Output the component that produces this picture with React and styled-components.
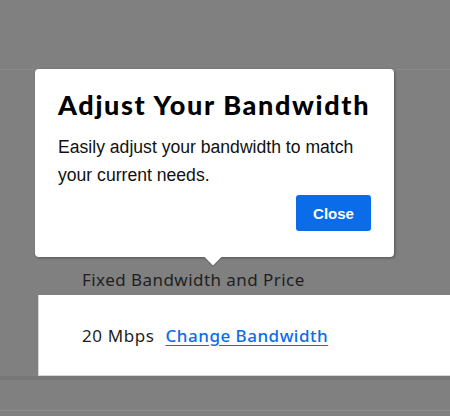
import React from "react";
import styled, { createGlobalStyle } from "styled-components";

const GlobalStyle = createGlobalStyle`
  html, body {
    margin: 0;
    padding: 0;
    background: #808080;
  }
`;

const Page = styled.div`
  width: 450px;
  height: 416px;
  background: #808080;
  display: flex;
  flex-direction: column;
  overflow: hidden;
`;

const Header = styled.div`
  height: 69px;
  border-bottom: 1px solid #8a8a8a;
  flex-shrink: 0;
`;

const Section = styled.div`
  position: relative;
  padding-left: 38px;
  padding-top: 197px;
`;

const Label = styled.div`
  font-family: "Noto Sans", sans-serif;
  font-size: 17px;
  letter-spacing: 0.45px;
  line-height: 25px;
  color: #1f1f1f;
  padding-left: 44px;
  margin-bottom: 3px;
`;

const Card = styled.div`
  height: 81px;
  background: #ffffff;
  border-left: 1px solid #d6d6d6;
  border-bottom: 1px solid #d6d6d6;
  display: flex;
  align-items: center;
  padding-left: 43px;
  padding-top: 1px;
  box-sizing: border-box;
  font-family: "Noto Sans", sans-serif;
  font-size: 17px;
  letter-spacing: 0.6px;
  color: #1f1f1f;
  gap: 11px;
`;

const Link = styled.a`
  color: #0a6ce8;
  text-decoration: underline;
  text-underline-offset: 3px;
  font-weight: 500;
  letter-spacing: 0.5px;
  cursor: pointer;
`;

const Footer = styled.div`
  height: 30px;
  border-top: 4px solid #777777;
  border-bottom: 1px solid #8c8c8c;
`;

const Popover = styled.div`
  position: absolute;
  left: 35px;
  top: -1px;
  width: 359px;
  box-sizing: border-box;
  padding: 20px 23px 26px 23px;
  background: #ffffff;
  border-radius: 4px;
  box-shadow: 1px 1px 3px rgba(0, 0, 0, 0.35);
  display: flex;
  flex-direction: column;

  &::after {
    content: "";
    position: absolute;
    left: 172px;
    bottom: -6px;
    width: 12px;
    height: 12px;
    background: #ffffff;
    transform: rotate(45deg);
    box-shadow: 1px 1px 1px rgba(0, 0, 0, 0.2);
  }
`;

const Title = styled.h2`
  margin: 0;
  font-family: "Lato", sans-serif;
  font-weight: 900;
  font-size: 27px;
  letter-spacing: 1.65px;
  line-height: 32px;
  white-space: nowrap;
  color: #000000;
`;

const Body = styled.p`
  margin: 12px 0 0 0;
  font-family: "Liberation Sans", Arial, sans-serif;
  font-size: 17.6px;
  line-height: 28px;
  color: #111111;
`;

const Actions = styled.div`
  display: flex;
  justify-content: flex-end;
  margin-top: 6px;
`;

const CloseButton = styled.button`
  width: 75px;
  height: 36px;
  border: none;
  border-radius: 3px;
  background: #0a6ce8;
  color: #ffffff;
  font-family: "Liberation Sans", Arial, sans-serif;
  font-weight: 700;
  font-size: 15px;
  cursor: pointer;
`;

export default function App() {
  return (
    <Page>
      <GlobalStyle />
      <Header />
      <Section>
        <Label>Fixed Bandwidth and Price</Label>
        <Card>
          <span>20 Mbps</span>
          <Link>Change Bandwidth</Link>
        </Card>
        <Popover>
          <Title>Adjust Your Bandwidth</Title>
          <Body>Easily adjust your bandwidth to match your current needs.</Body>
          <Actions>
            <CloseButton>Close</CloseButton>
          </Actions>
        </Popover>
      </Section>
      <Footer />
    </Page>
  );
}
